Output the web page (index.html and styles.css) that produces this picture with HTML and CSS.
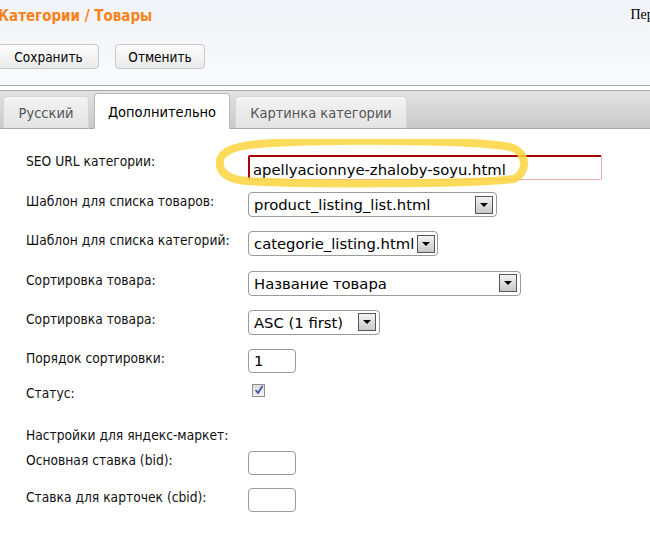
FILE: index.html
```html
<!DOCTYPE html>
<html lang="ru">
<head>
<meta charset="utf-8">
<title>Категории / Товары</title>
<link rel="stylesheet" href="styles.css">
</head>
<body>
<div class="header">
  <div class="title-row">
    <h1 class="title">Категории / Товары</h1>
    <span class="lang">Пере</span>
  </div>
  <div class="buttons">
    <button class="btn btn-save">Сохранить</button>
    <button class="btn btn-cancel">Отменить</button>
  </div>
</div>
<div class="tabbar">
  <div class="tab tab-ru">Русский</div>
  <div class="tab tab-active">Дополнительно</div>
  <div class="tab tab-img">Картинка категории</div>
</div>
<div class="form">
  <div class="row row-seo">
    <div class="label">SEO URL категории:</div>
    <div class="field"><div class="input input-seo">apellyacionnye-zhaloby-soyu.html</div></div>
  </div>
  <div class="row">
    <div class="label">Шаблон для списка товаров:</div>
    <div class="field"><div class="select sel-1"><span class="sel-text">product_listing_list.html</span><span class="arrow"></span></div></div>
  </div>
  <div class="row row-tall">
    <div class="label">Шаблон для списка категорий:</div>
    <div class="field"><div class="select sel-2"><span class="sel-text">categorie_listing.html</span><span class="arrow"></span></div></div>
  </div>
  <div class="row">
    <div class="label">Сортировка товара:</div>
    <div class="field"><div class="select sel-3"><span class="sel-text">Название товара</span><span class="arrow"></span></div></div>
  </div>
  <div class="row">
    <div class="label">Сортировка товара:</div>
    <div class="field"><div class="select sel-4"><span class="sel-text">ASC (1 first)</span><span class="arrow"></span></div></div>
  </div>
  <div class="row row-order">
    <div class="label">Порядок сортировки:</div>
    <div class="field"><div class="input input-small">1</div></div>
  </div>
  <div class="row row-status">
    <div class="label">Статус:</div>
    <div class="field"><span class="checkbox"><svg width="10" height="10" viewBox="0 0 10 10"><path d="M1.5 5 L4 8 L8.5 1" fill="none" stroke="#3a5aa8" stroke-width="1.8"/></svg></span></div>
  </div>
  <div class="row row-section">
    <div class="label label-wide">Настройки для яндекс-маркет:</div>
  </div>
  <div class="row row-bid">
    <div class="label">Основная ставка (bid):</div>
    <div class="field"><div class="input input-small"></div></div>
  </div>
  <div class="row">
    <div class="label">Ставка для карточек (cbid):</div>
    <div class="field"><div class="input input-small"></div></div>
  </div>
  <svg class="marker" width="330" height="60" viewBox="0 0 330 60">
    <path d="M42 5 C110 0 262 1 294 8 C312 13 312 33 298 40 C250 46 80 45 30 42 C10 40 2 32 4 21 C6 13 16 7 44 5" fill="none" stroke="#fad53c" stroke-opacity="0.85" stroke-width="8" stroke-linecap="round"/>
  </svg>
</div>
</body>
</html>
```
FILE: styles.css
```css
* { box-sizing: border-box; }
body {
  margin: 0;
  background: #fff;
  font-family: "DejaVu Sans Condensed", "DejaVu Sans", sans-serif;
  font-size: 13.7px;
  color: #111;
  width: 650px;
  overflow: hidden;
}
.header {
  height: 86px;
  background: linear-gradient(#f1f3f8, #f9fafd);
  border-bottom: 1px solid #a8a8a8;
}
.title-row {
  display: flex;
  justify-content: space-between;
  height: 40px;
}
.title {
  margin: 0;
  padding: 7px 0 0 0;
  margin-left: -2px;
  font-size: 15px;
  font-weight: bold;
  color: #f7831a;
}
.lang {
  font-family: "Liberation Serif", serif;
  font-size: 14px;
  color: #000;
  padding-top: 7px;
  margin-right: -10px;
}
.buttons {
  display: flex;
  gap: 16px;
  margin-left: -2px;
  margin-top: 4px;
}
.btn {
  font-family: "DejaVu Sans Condensed", "DejaVu Sans", sans-serif;
  font-size: 13.5px;
  color: #000;
  height: 25px;
  border: 1px solid #c8c8c8;
  border-radius: 4px;
  background: linear-gradient(#fdfdfd, #e9e9e9);
  padding: 0;
}
.btn-save { width: 101px; }
.btn-cancel { width: 90px; }
.tabbar {
  margin-top: 4px;
  height: 39px;
  border-top: 1px solid #a8a8a8;
  border-bottom: 1px solid #a8a8a8;
  background: linear-gradient(#e3e3e3, #c9c9c9);
  display: flex;
  align-items: flex-end;
  padding-left: 3px;
  gap: 5px;
}
.tab {
  height: 33px;
  margin-bottom: -1px;
  border: 1px solid #d6d6d6;
  border-bottom: 1px solid #a8a8a8;
  border-radius: 4px 4px 0 0;
  background: linear-gradient(#f3f3f3, #e3e3e3);
  color: #555;
  display: flex;
  align-items: center;
  justify-content: center;
  font-size: 14.5px;
}
.tab-ru { width: 86px; }
.tab-active {
  width: 136px;
  height: 36px;
  background: #fff;
  color: #000;
  border-color: #b8b8b8;
  border-bottom-color: #fff;
  padding-top: 1px;
}
.tab-img { width: 172px; }
.form {
  position: relative;
  padding: 24px 0 0 26px;
}
.row {
  display: grid;
  grid-template-columns: 222px auto;
  height: 39px;
}
.row-seo { height: 39px; }
.row-tall { height: 39.5px; }
.label {
  padding-top: 1px;
  white-space: nowrap;
}
.row-seo .label { padding-top: 0; }
.field { display: flex; align-items: flex-start; }
.input, .select {
  font-family: "DejaVu Sans", sans-serif;
  font-size: 14.8px;
  color: #000;
  height: 25px;
  border: 1px solid #9a9a9a;
  border-radius: 4px;
  background: #fff;
  display: flex;
  align-items: center;
  padding-left: 5px;
}
.input-seo {
  width: 354px;
  height: 25px;
  margin-top: 2px;
  border-radius: 2px;
  border-top: 2px solid #a80000;
  border-left: 2px solid #a80000;
  border-right: 1px solid #f4a7a7;
  border-bottom: 1px solid #f4a7a7;
  padding-left: 3px;
  padding-top: 2px;
}
.input-small {
  width: 48px;
  height: 24px;
}
.select {
  justify-content: space-between;
  padding-right: 3px;
}
.sel-1 { width: 249px; }
.sel-2 { width: 190px; padding-right: 2px; gap: 3px; }
.sel-3 { width: 273px; }
.sel-4 { width: 132px; }
.sel-text { white-space: nowrap; }
.arrow {
  width: 18px;
  height: 18px;
  border: 1px solid #555;
  background: linear-gradient(#f4f4f4, #c8c8c8);
  position: relative;
  flex: none;
}
.arrow::after {
  content: "";
  position: absolute;
  left: 4px;
  top: 6px;
  border-left: 4px solid transparent;
  border-right: 4px solid transparent;
  border-top: 4px solid #000;
}
.row-order { height: 35px; }
.row-status { height: 42px; }
.checkbox {
  width: 13px;
  height: 13px;
  margin-left: 4px;
  border: 1px solid #8f8f8f;
  background: linear-gradient(#dcdcdc, #f4f4f4);
  display: flex;
  align-items: center;
  justify-content: center;
}
.row-section { height: 25px; }
.row-bid { height: 37px; }
.marker {
  position: absolute;
  left: 216px;
  top: 10px;
  pointer-events: none;
}
```
